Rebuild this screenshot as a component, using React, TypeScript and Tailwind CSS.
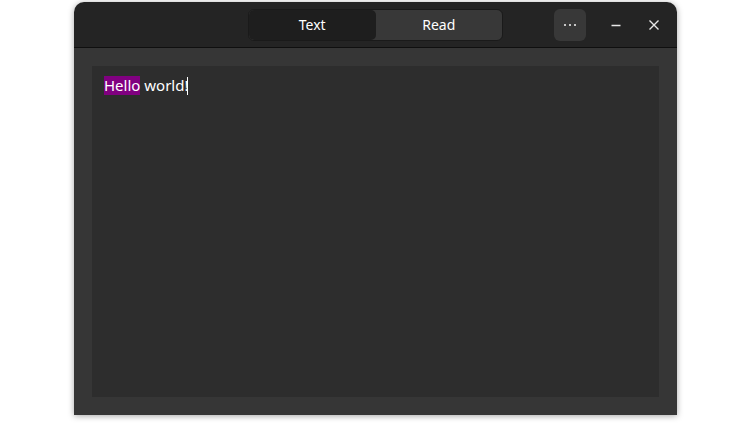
import { useState } from "react";

function TabSwitcher() {
    const [tab, setTab] = useState("text");
    return (
        <div className="flex h-[32px] w-[255px] rounded-[6px] bg-[#383838] overflow-hidden border border-[#1a1a1a]">
            <button
                className={`flex-1 flex items-center justify-center text-[14px] text-white rounded-[5px] ${
                    tab === "text" ? "bg-[#1e1e1e]" : ""
                }`}
                onClick={() => setTab("text")}
            >
                Text
            </button>
            <button
                className={`flex-1 flex items-center justify-center text-[14px] text-white rounded-[5px] ${
                    tab === "read" ? "bg-[#1e1e1e]" : ""
                }`}
                onClick={() => setTab("read")}
            >
                Read
            </button>
        </div>
    );
}

export default function App() {
    return (
        <div
            className="w-[752px] h-[423px] bg-white pl-[74px] pt-[2px]"
            style={{ fontFamily: '"Noto Sans", "Open Sans", sans-serif' }}
        >
            <div className="w-[603px] h-[413px] flex flex-col rounded-t-[10px] overflow-hidden shadow-[0_1px_6px_rgba(0,0,0,0.35)]">
                {/* header bar */}
                <div className="relative h-[46px] flex items-center justify-center bg-[#242424] border-b border-[#0f0f0f] shrink-0">
                    <TabSwitcher />
                    <div className="absolute right-0 top-0 h-full flex items-center">
                        <button className="w-[32px] h-[32px] rounded-[6px] bg-[#383838] flex items-center justify-center text-white">
                            <svg width="14" height="4" viewBox="0 0 14 4">
                                <circle cx="2" cy="2" r="1.1" fill="#e8e8e8" />
                                <circle cx="7" cy="2" r="1.1" fill="#e8e8e8" />
                                <circle cx="12" cy="2" r="1.1" fill="#e8e8e8" />
                            </svg>
                        </button>
                        <button className="w-[32px] h-[32px] ml-[14px] flex items-center justify-center">
                            <svg width="12" height="12" viewBox="0 0 12 12">
                                <path d="M1.5 6.5h9" stroke="#e8e8e8" strokeWidth="1.4" />
                            </svg>
                        </button>
                        <button className="w-[32px] h-[32px] ml-[6px] mr-[7px] flex items-center justify-center">
                            <svg width="12" height="12" viewBox="0 0 12 12">
                                <path
                                    d="M1.5 1.5l9 9M10.5 1.5l-9 9"
                                    stroke="#e8e8e8"
                                    strokeWidth="1.4"
                                />
                            </svg>
                        </button>
                    </div>
                </div>
                {/* body */}
                <div className="flex-1 bg-[#363636] p-[18px] flex">
                    <div className="flex-1 bg-[#2d2d2d] px-[12px] pt-[10px]">
                        <div className="text-[15px] leading-[19px] text-white flex items-center">
                            <span className="bg-[#800080]">Hello</span>
                            <span>&nbsp;world!</span>
                            <span className="w-[1px] h-[18px] bg-white ml-[-1px]" />
                        </div>
                    </div>
                </div>
            </div>
        </div>
    );
}
